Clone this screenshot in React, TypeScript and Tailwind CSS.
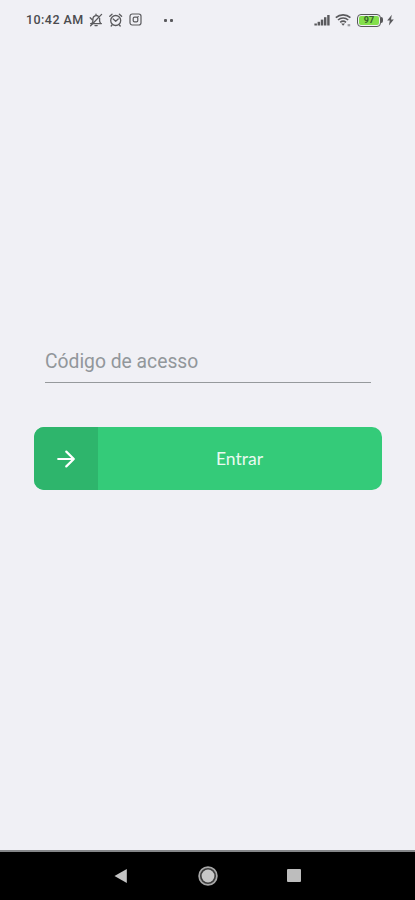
import { useState } from "react";

const StatusBar = () => (
  <header className="flex h-10 shrink-0 items-center justify-between pl-[26px] pr-[21px] text-[#5a5a5d]">
    <div className="flex items-center">
      <span className="w-[58px] whitespace-nowrap font-['Roboto',sans-serif] text-[12.5px] font-medium leading-none tracking-[0.45px] text-[#4b4b4e]">
        10:42 AM
      </span>

      {/* Muted bell */}
      <svg className="ml-[5px] h-[14px] w-[14px]" viewBox="0 0 14 14" fill="none" stroke="currentColor" strokeWidth="1.3" strokeLinecap="round" strokeLinejoin="round">
        <path d="M1.6 10.6h10.8M3 10.2l.9-2V5.6a3.3 3.3 0 0 1 5.4-2.3M10.6 5.2v3l.9 2M6 12.6h2.2M7 1.2v1" />
        <path d="M1.6 12.8 12.6 1.4M1.2 4.8l2 2" />
      </svg>

      {/* Alarm */}
      <svg className="ml-[6px] h-[14px] w-[14px]" viewBox="0 0 14 14" fill="none" stroke="currentColor" strokeWidth="1.3" strokeLinecap="round" strokeLinejoin="round">
        <circle cx="6.7" cy="7.5" r="5" />
        <path d="m4.2 6 2.5 2.2L9.2 6M.8 3.2l2.2-2M12.6 3.2l-2.2-2M3 12l-.8 1M10.4 12l.8 1" />
      </svg>

      {/* Instagram */}
      <svg className="ml-[6px] h-[14px] w-[13px]" viewBox="0 0 13 14" fill="none" stroke="currentColor" strokeWidth="1.2">
        <rect x="1" y="1" width="11" height="11" rx="2.2" />
        <rect x="4.2" y="4.2" width="4.6" height="4.6" rx="1.3" />
        <path d="M8.5 3.6h1.2" />
      </svg>

      <div className="ml-[22px] flex gap-[3px]">
        <span className="h-[3px] w-[3px] rounded-[1px] bg-current" />
        <span className="h-[3px] w-[3px] rounded-[1px] bg-current" />
      </div>
    </div>

    <div className="flex items-center">
      {/* Signal */}
      <svg className="h-[13px] w-[17px]" viewBox="0 0 17 13" fill="currentColor">
        <rect x=".4" y="9.5" width="2.5" height="2" />
        <rect x="3.6" y="7.8" width="2.5" height="3.7" />
        <rect x="6.8" y="5.6" width="2.5" height="5.9" />
        <rect x="10" y="3.2" width="2.4" height="8.3" />
        <rect x="13.2" y="1" width="2.4" height="10.5" />
      </svg>

      {/* Wi-Fi */}
      <svg className="ml-[4px] h-[13px] w-[17px]" viewBox="0 0 17 13" fill="none" stroke="currentColor" strokeWidth="1.6">
        <path d="M.8 3.6a11 11 0 0 1 14.6 0M3 6a7.7 7.7 0 0 1 10.2 0M5.2 8.3a4.5 4.5 0 0 1 5.8 0" />
        <path d="m6.2 9.5 1.9 2.3L10 9.5z" fill="currentColor" stroke="none" />
        <path d="M12.6 11.2h2.6" strokeWidth="2.2" opacity=".55" />
      </svg>

      {/* Battery */}
      <div className="ml-[5px] flex items-center">
        <div className="flex h-[13px] w-[24px] rounded-[4px] border-[1.5px] border-[#58585a] p-px">
          <div className="flex flex-1 items-center justify-center rounded-[2px] bg-[#83df4b] font-['Roboto',sans-serif] text-[9px] font-bold leading-none text-[#35612a]">
            97
          </div>
        </div>
        <span className="h-[6px] w-[2px] rounded-r-[2px] bg-[#58585a]" />
      </div>

      <svg className="ml-[4px] h-[12px] w-[7px]" viewBox="0 0 7 12" fill="currentColor">
        <path d="M4.8.8.2 6.6h2.6l-.9 4.8 4.9-6H4z" />
      </svg>
    </div>
  </header>
);

const NavigationBar = () => (
  <nav className="flex h-[50px] shrink-0 items-center justify-between border-t-2 border-[#858789] bg-black px-[114px] pb-px">
    <svg className="h-[16px] w-[14px]" viewBox="0 0 14 16" fill="#c4c4c4">
      <path d="M.5 8 12.8 1v14z" />
    </svg>
    <svg className="h-[20px] w-[20px]" viewBox="0 0 20 20">
      <circle cx="10" cy="10" r="8.9" fill="#3c3c3c" stroke="#a8a8a8" strokeWidth="1.7" />
      <circle cx="10" cy="10" r="6.4" fill="#c8c8c8" />
    </svg>
    <span className="h-[13px] w-[14px] rounded-[1px] bg-[#bdbdbd]" />
  </nav>
);

export default function App() {
  const [code, setCode] = useState("");

  return (
    <div className="flex h-[900px] w-full flex-col overflow-hidden bg-[#f0f0f5]">
      <StatusBar />

      <main className="flex flex-1 flex-col pl-[34px] pr-[33px] pt-[303px]">
        <input
          className="mx-[11px] h-10 border-b border-[#96999c] bg-transparent pb-[3px] font-['Roboto',sans-serif] text-[19.3px] text-[#626569] outline-none placeholder:text-[#92979b] placeholder:opacity-100"
          placeholder="Código de acesso"
          value={code}
          onChange={(e) => setCode(e.target.value)}
        />

        <button
          type="button"
          className="mt-11 flex h-[63px] items-stretch overflow-hidden rounded-[10px] bg-[#34cb79]"
        >
          <span className="flex w-16 items-center justify-center bg-[#2eb56c]">
            <svg className="h-[18px] w-[18px]" viewBox="0 0 18 18" fill="none" stroke="#fff" strokeWidth="2.2" strokeLinecap="round" strokeLinejoin="round">
              <path d="M1.2 9h15.6M9.3 1.6 16.8 9l-7.5 7.4" />
            </svg>
          </span>
          <span className="flex flex-1 items-center justify-center pr-px pt-[2px] font-['Lato',sans-serif] text-[17.5px] text-[#e9faf0]">
            Entrar
          </span>
        </button>
      </main>

      <NavigationBar />
    </div>
  );
}
